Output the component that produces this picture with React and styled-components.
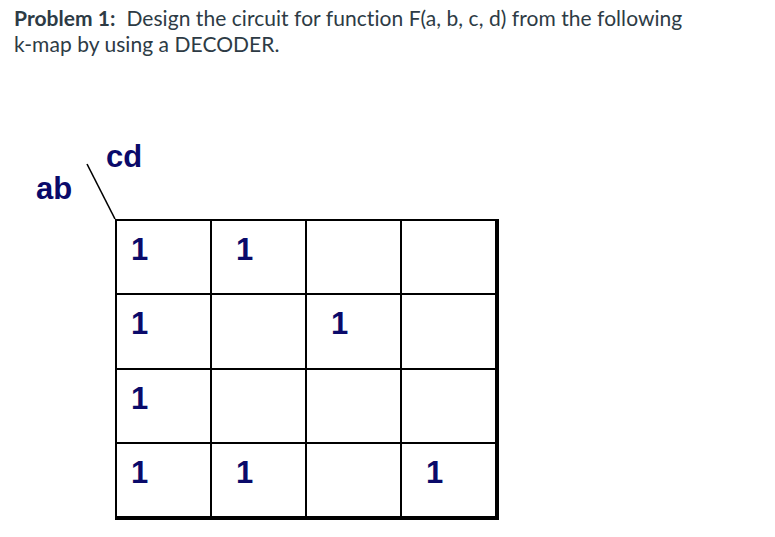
import React from 'react';
import styled, { createGlobalStyle } from 'styled-components';

const GlobalStyle = createGlobalStyle`
  body {
    margin: 0;
    background: #fff;
  }
`;

const kmap = [
  [1, 1, 0, 0],
  [1, 0, 1, 0],
  [1, 0, 0, 0],
  [1, 1, 0, 1],
];

const App = () => {
  return (
    <Page>
      <GlobalStyle />
      <Question>
        <strong>Problem 1:</strong>&nbsp; Design the circuit for function F(a, b, c, d) from the following
        <br />
        k-map by using a DECODER.
      </Question>

      <Figure>
        <RowLabel>ab</RowLabel>
        <ColLabel>cd</ColLabel>
        <Slash width="32" height="60" viewBox="0 0 32 60">
          <line x1="2" y1="1" x2="30" y2="56" stroke="#000" strokeWidth="1.6" />
        </Slash>

        <Grid>
          {kmap.map((row, r) =>
            row.map((v, c) => (
              <Cell key={`${r}-${c}`} $first={c === 0}>
                {v ? '1' : ''}
              </Cell>
            ))
          )}
        </Grid>
      </Figure>
    </Page>
  );
};

export default App;

const Page = styled.div`
  width: 775px;
  height: 537px;
  overflow: hidden;
`;

const Question = styled.p`
  margin: 0;
  padding: 5px 14px 1px;
  font-family: Lato, "Open Sans", sans-serif;
  font-size: 21px;
  letter-spacing: 0.05px;
  line-height: 26px;
  color: #2d3b45;

  strong {
    font-weight: 700;
  }
`;

const Figure = styled.div`
  position: relative;
  margin-top: 81px;
  padding: 80px 0 0 115px;
`;

const Label = styled.span`
  position: absolute;
  font-family: "Liberation Sans", Arial, sans-serif;
  font-weight: 700;
  font-size: 31px;
  line-height: 1;
  color: #0a0a6a;
`;

const RowLabel = styled(Label)`
  left: 36px;
  top: 34px;
`;

const ColLabel = styled(Label)`
  left: 106px;
  top: 2px;
`;

const Slash = styled.svg`
  position: absolute;
  left: 85px;
  top: 24px;
`;

const Grid = styled.div`
  display: grid;
  grid-template-columns: repeat(4, 93px);
  grid-template-rows: 72px 73px 72px 72px;
  gap: 2px;
  width: max-content;
  padding: 2px 4px 4px 2px;
  background: #000;
`;

const Cell = styled.div`
  background: #fff;
  padding: 13px 0 0 ${(p) => (p.$first ? '14px' : '24px')};
  font-family: "Liberation Sans", Arial, sans-serif;
  font-weight: 700;
  font-size: 31px;
  line-height: 1;
  color: #0a0a6a;
`;
